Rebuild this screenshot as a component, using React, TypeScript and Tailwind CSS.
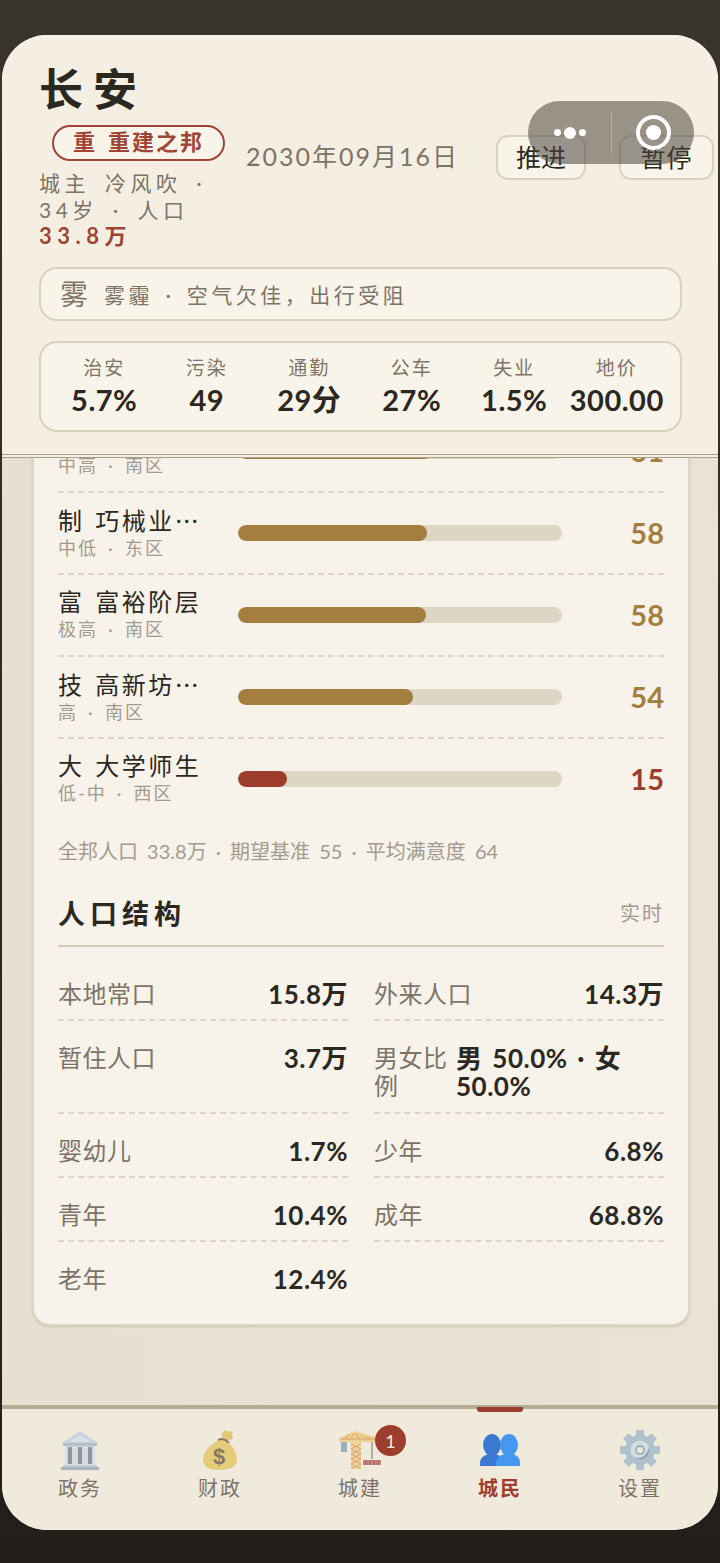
const font = {
  fontFamily: 'Lato, "Noto Sans CJK SC", sans-serif',
};

const metrics = [
  { label: "治安", value: "5.7%" },
  { label: "污染", value: "49" },
  { label: "通勤", value: "29分" },
  { label: "公车", value: "27%" },
  { label: "失业", value: "1.5%" },
  { label: "地价", value: "300.00" },
];

// first row is scrolled mostly under the header
const groups = [
  { name: "商 商贸行会", sub: "中高 · 南区", score: 61, width: 60 },
  { name: "制 巧械业", more: true, sub: "中低 · 东区", score: 58, width: 58.3 },
  { name: "富 富裕阶层", sub: "极高 · 南区", score: 58, width: 58 },
  { name: "技 高新坊", more: true, sub: "高 · 南区", score: 54, width: 54 },
  { name: "大 大学师生", sub: "低-中 · 西区", score: 15, width: 15, low: true },
];

const stats = [
  { label: "本地常口", value: "15.8万" },
  { label: "外来人口", value: "14.3万" },
  { label: "暂住人口", value: "3.7万" },
  { label: "男女比例", value: "男 50.0% · 女 50.0%", wrap: true },
  { label: "婴幼儿", value: "1.7%" },
  { label: "少年", value: "6.8%" },
  { label: "青年", value: "10.4%" },
  { label: "成年", value: "68.8%" },
  { label: "老年", value: "12.4%", last: true },
];

function BankIcon() {
  return (
    <svg viewBox="0 0 40 40" className="h-10 w-10 opacity-85" aria-hidden="true">
      <path d="M20 1 38 13H2z" fill="#c3cfdb" />
      <path d="M20 5 31 12H9z" fill="#d8e0e8" />
      <rect x="3" y="13" width="34" height="3" fill="#aab8c6" />
      <rect x="5" y="16" width="30" height="19" fill="#d3dce5" />
      <rect x="8" y="17" width="4" height="17" fill="#7d8791" />
      <rect x="18" y="17" width="4" height="17" fill="#7d8791" />
      <rect x="28" y="17" width="4" height="17" fill="#7d8791" />
      <rect x="3" y="35" width="34" height="2" fill="#bcc8d3" />
      <rect x="1" y="37" width="38" height="3" rx="1" fill="#9dabb9" />
    </svg>
  );
}

function BagIcon() {
  return (
    <svg viewBox="0 0 40 40" className="h-10 w-10 opacity-85" aria-hidden="true">
      <path d="M22 9C14 11 3 20 3 30c0 7 6 10 16 10s18-3 18-10c0-9-7-18-15-21z" fill="#e4c76a" />
      <path d="M23 8c-2-3-2-5 0-5 1-3 4-3 5-1 3-2 6 0 4 3 2 2 0 5-3 5-2 0-4-1-6-2z" fill="#e2bf62" />
      <path d="M18 10c3-2 8-1 11 3" fill="none" stroke="#7c6a48" strokeWidth="2" />
      <text x="19" y="34" textAnchor="middle" fontSize="22" fontWeight="700" fill="#6f6452" fontFamily="Liberation Sans, sans-serif">$</text>
    </svg>
  );
}

function CraneIcon() {
  return (
    <svg viewBox="0 0 42 38" className="h-[38px] w-[42px] opacity-85" aria-hidden="true">
      <path d="M0 7 16 0l26 8v3H0z" fill="#f0cb87" />
      <path d="M2 8h38M6 8l4-5M12 8l3-6M20 8l-3-6M26 8l-4-4M32 8l-5-3" stroke="#cf9a58" strokeWidth="1" fill="none" />
      <rect x="2" y="11" width="6" height="10" fill="#8ba6bb" />
      <path d="M12 11h10v27H12z" fill="#f0cf95" />
      <path d="M12 13l10 5-10 5 10 5-10 5 10 5M22 13l-10 5 10 5-10 5 10 5-10 5" stroke="#d39a5a" strokeWidth="1" fill="none" />
      <path d="M33 11v17" stroke="#8d8a82" strokeWidth="1.5" />
      <rect x="24" y="29" width="18" height="5" fill="#c0706a" />
      <path d="M27 29v5M31 29v5M35 29v5M39 29v5" stroke="#8e4640" strokeWidth="1" />
    </svg>
  );
}

function PeopleIcon() {
  return (
    <svg viewBox="0 0 40 32" className="h-8 w-10" aria-hidden="true">
      <ellipse cx="12" cy="11" rx="9" ry="11" fill="#3b78d2" />
      <path d="M0 32v-3c0-5 4-8 9-9h6c5 1 9 4 9 9v3z" fill="#3b78d2" />
      <ellipse cx="29" cy="11" rx="9" ry="11" fill="#4498f0" />
      <path d="M16 32v-3c0-5 4-8 9-9h8c4 1 7 4 7 9v3z" fill="#4498f0" />
    </svg>
  );
}

function GearIcon() {
  return (
    <svg viewBox="0 0 40 40" className="h-10 w-10 opacity-85" aria-hidden="true">
      <g fill="#a3bacb">
        {[0, 45, 90, 135, 180, 225, 270, 315].map((deg) => (
          <rect key={deg} x="16" y="0" width="8" height="10" rx="1" transform={`rotate(${deg} 20 20)`} />
        ))}
        <circle cx="20" cy="20" r="15" />
      </g>
      <circle cx="20" cy="20" r="9.5" fill="#cfdae2" />
      <path d="M29 17a9.5 9.5 0 0 1-16 9.5A9 9 0 0 0 25 25c2-2 3-5 4-8z" fill="#7f99ad" />
      <circle cx="20" cy="20" r="5" fill="#8ea7b9" />
      <circle cx="20" cy="20" r="3" fill="#eee8dc" />
    </svg>
  );
}

const tabs = [
  { label: "政务", icon: <BankIcon /> },
  { label: "财政", icon: <BagIcon /> },
  { label: "城建", icon: <CraneIcon />, badge: 1 },
  { label: "城民", icon: <PeopleIcon />, active: true },
  { label: "设置", icon: <GearIcon /> },
];

export default function App() {
  return (
    <div
      className="relative h-[1563px] w-[720px] overflow-hidden bg-gradient-to-b from-[#3a342e] to-[#221f1a] px-[2px] pt-[35px]"
      style={font}
    >
      <div className="flex h-[1495px] flex-col overflow-hidden rounded-[45px] bg-[#e8e2d3]">
        {/* fixed header */}
        <header className="z-10 h-[423px] shrink-0 border-b-[4px] border-double border-[#a89f8a] bg-[#f5efe3] pl-[37px] pr-[5px]">
          <h1 className="mt-[24px] h-[60px] text-[44px] font-bold leading-[60px] tracking-[10px] text-[#2b2822]">
            长安
          </h1>
          <div className="flex h-[148px] items-start">
            <div className="w-[207px] shrink-0">
              <div className="ml-[13px] mt-[6px] flex h-[36px] w-[173px] items-center justify-center gap-[11px] rounded-full border-2 border-[#a04535] bg-[#f9f4ea] pb-[2px] text-[22px] font-bold leading-none tracking-[2px] text-[#a04535]">
                <span>重</span>
                <span>重建之邦</span>
              </div>
              <p className="mt-[9px] text-[21px] leading-[26.5px] tracking-[4.5px] whitespace-pre text-[#7d7467] [word-spacing:5px]">
                城主 冷风吹 ·
                <br />
                34岁 · 人口
                <br />
                <span className="text-[22px] font-bold tracking-[5.5px] text-[#a04535]">33.8万</span>
              </p>
            </div>
            <div className="mt-[19px] w-[250px] shrink-0 text-[25px] leading-[36px] tracking-[2px] whitespace-nowrap text-[#7d7467]">
              2030年09月16日
            </div>
            <button className="mt-[16px] h-[45px] w-[90px] shrink-0 rounded-[12px] border-2 border-[#dad2bf] bg-[#f9f4ea] text-[25px] text-[#2b2822]">
              推进
            </button>
            <button className="ml-[33px] mt-[16px] h-[45px] w-[95px] shrink-0 rounded-[12px] border-2 border-[#dad2bf] bg-[#f9f4ea] text-[25px] tracking-[1px] text-[#2b2822]">
              暂停
            </button>
          </div>
          <div className="flex h-[54px] w-[643px] items-center gap-[16px] rounded-[18px] border-2 border-[#dad2bf] bg-[#f9f4ea] pl-[19px]">
            <span className="text-[28px] leading-none text-[#7d7467]">雾</span>
            <span className="text-[21px] leading-none tracking-[3.5px] text-[#7d7467] [word-spacing:3.5px]">雾霾 · 空气欠佳，出行受阻</span>
          </div>
          <div className="mt-[20px] grid h-[91px] w-[643px] grid-cols-6 rounded-[18px] border-2 border-[#dad2bf] bg-[#f9f4ea] px-[12px] pt-[13px]">
            {metrics.map((m) => (
              <div key={m.label} className="flex flex-col items-center">
                <span className="text-[19px] leading-[24px] tracking-[2px] text-[#7d7467]">{m.label}</span>
                <span className="mt-[3px] text-[29px] font-bold leading-[34px] tracking-[0.5px] whitespace-nowrap text-[#2b2822]">
                  {m.value}
                </span>
              </div>
            ))}
          </div>
        </header>

        {/* scrolled content, first row sits under the header */}
        <main className="min-h-0 flex-1 overflow-hidden bg-gradient-to-r from-[#e6e0d0] to-[#e9e3d5] pl-[30px] pr-[28px]">
          <section className="-mt-[49px] h-[917px] rounded-[18px] border-2 border-[#dcd5c5] bg-[#f7f2ea] px-[24px] shadow-sm">
            {groups.map((g, i) => (
              <div
                key={g.name}
                className={`flex h-[82px] items-center border-b-2 border-dashed ${i < groups.length - 1 ? "border-[#ddd5c8]" : "border-transparent"}`}
              >
                <div className="-mt-[2px] w-[180px] shrink-0">
                  <div className="text-[24px] leading-[30px] tracking-[2.5px] whitespace-pre text-[#2b2822] [word-spacing:2px]">
                    {g.name}
                    {g.more && <span className="font-['Noto_Sans_CJK_SC']">…</span>}
                  </div>
                  <div className="text-[18px] leading-[24px] tracking-[2px] whitespace-pre text-[#a39b8e] [word-spacing:3.5px]">{g.sub}</div>
                </div>
                <div className="h-[16px] w-[324px] shrink-0 overflow-hidden rounded-full bg-[#ddd6c4]">
                  <div
                    className={`h-full rounded-full ${g.low ? "bg-[#9c3d2e]" : "bg-[#a47e3f]"}`}
                    style={{ width: `${g.width}%` }}
                  />
                </div>
                <div className={`-mt-[2px] flex-1 text-right text-[29px] font-bold leading-none ${g.low ? "text-[#9c3d2e]" : "text-[#a47e3f]"}`}>
                  {g.score}
                </div>
              </div>
            ))}
            <p className="mt-[16px] text-[20px] leading-[28px] whitespace-nowrap text-[#a39b8e] [word-spacing:4px]">
              全邦人口 33.8万 · 期望基准 55 · 平均满意度 64
            </p>
            <div className="mt-[20px] flex h-[62px] items-center justify-between border-b-2 border-[#d5ccba] pb-[4px]">
              <h2 className="text-[27px] font-bold leading-none tracking-[5px] text-[#2b2822]">人口结构</h2>
              <span className="text-[20px] tracking-[2px] text-[#a39b8e]">实时</span>
            </div>
            <div className="mt-[10px] grid grid-cols-2 gap-x-[26px]">
              {stats.map((s) => (
                <div
                  key={s.label}
                  className={`flex min-h-[64px] justify-between pt-[23px] ${s.wrap ? "gap-[8px] pb-[12px]" : ""} ${s.last ? "" : "border-b-2 border-dashed border-[#ddd5c8]"}`}
                >
                  <span className={`${s.wrap ? "w-[74px] shrink-0" : "whitespace-nowrap"} text-[24px] leading-[28px] tracking-[0.5px] text-[#7d7467]`}>
                    {s.label}
                  </span>
                  <span className={`${s.wrap ? "flex-1 text-left [word-spacing:3px]" : "text-right"} text-[26px] font-bold leading-[28px] tracking-[0.5px] text-[#2b2822]`}>
                    {s.value}
                  </span>
                </div>
              ))}
            </div>
          </section>
        </main>

        {/* tab bar */}
        <nav className="relative grid h-[125px] shrink-0 grid-cols-5 border-t-4 border-[#b5ac96] bg-[#f0eadd] px-[8px] pb-[30px] pt-[19px]">
          {tabs.map((t) => (
            <div key={t.label} className="relative flex flex-col items-center">
              {t.active && <div className="absolute -top-[21px] h-[5px] w-[46px] rounded-b-[3px] bg-[#9c3d2e]" />}
              <div className="flex h-[44px] items-center justify-center">{t.icon}</div>
              <span
                className={`mt-[2px] text-[20px] leading-[28px] tracking-[2px] ${t.active ? "font-bold text-[#9c3d2e]" : "text-[#7d7467]"}`}
              >
                {t.label}
              </span>
              {t.badge && (
                <div className="absolute left-[85px] -top-[3px] flex h-[31px] w-[31px] items-center justify-center rounded-full bg-[#9c3d2e] text-[18px] leading-none text-[#f5efe3]">
                  {t.badge}
                </div>
              )}
            </div>
          ))}
        </nav>
      </div>

      {/* mini program capsule lying over the page */}
      <div className="absolute left-[528px] top-[101px] z-20 flex h-[63px] w-[166px] items-center rounded-full bg-[#4b463c]/55">
        <div className="flex w-[83px] items-center justify-center gap-[3px]">
          <span className="h-[7px] w-[7px] rounded-full bg-white" />
          <span className="h-[12px] w-[12px] rounded-full bg-white" />
          <span className="h-[7px] w-[7px] rounded-full bg-white" />
        </div>
        <div className="h-[40px] w-px bg-white/30" />
        <div className="flex flex-1 items-center justify-center">
          <div className="flex h-[35px] w-[35px] items-center justify-center rounded-full border-[4px] border-white">
            <span className="h-[15px] w-[15px] rounded-full bg-white" />
          </div>
        </div>
      </div>
    </div>
  );
}
